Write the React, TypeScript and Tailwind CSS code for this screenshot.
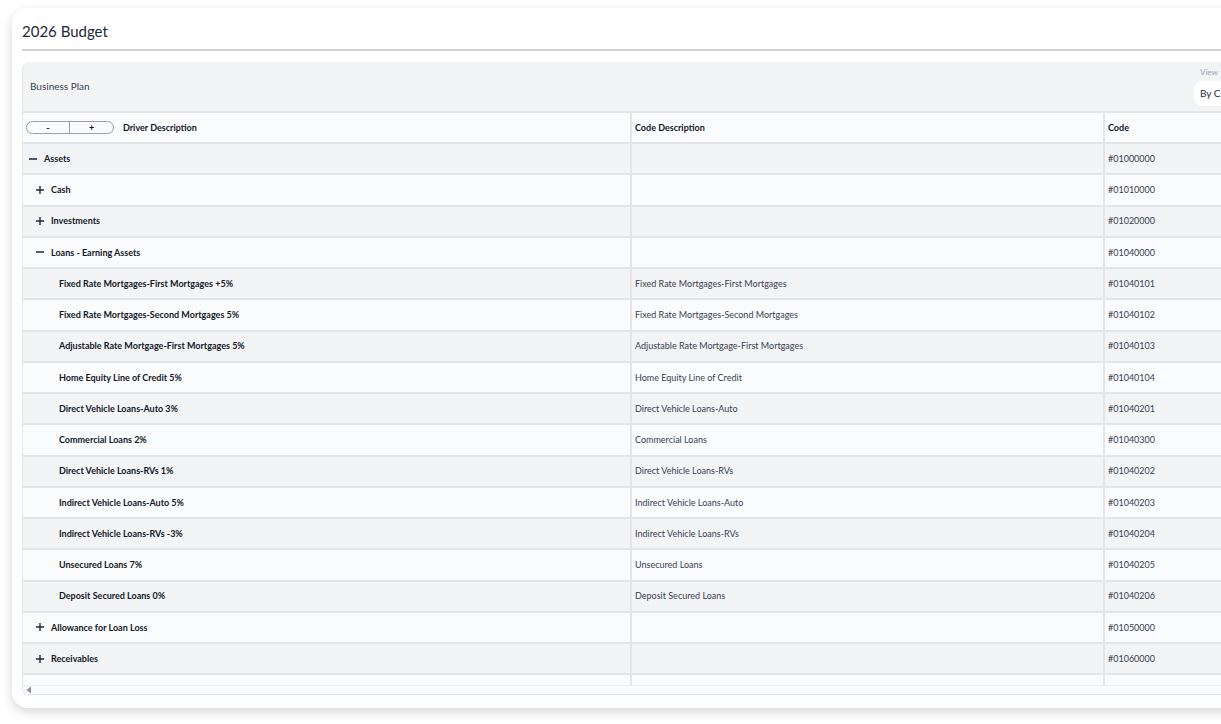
import React from "react";

type Row = { label: string; desc: string; code: string; level: 0 | 1 | 2; icon?: "minus" | "plus" };

const rows: Row[] = [
  { label: "Assets", desc: "", code: "#01000000", level: 0, icon: "minus" },
  { label: "Cash", desc: "", code: "#01010000", level: 1, icon: "plus" },
  { label: "Investments", desc: "", code: "#01020000", level: 1, icon: "plus" },
  { label: "Loans - Earning Assets", desc: "", code: "#01040000", level: 1, icon: "minus" },
  { label: "Fixed Rate Mortgages-First Mortgages +5%", desc: "Fixed Rate Mortgages-First Mortgages", code: "#01040101", level: 2 },
  { label: "Fixed Rate Mortgages-Second Mortgages 5%", desc: "Fixed Rate Mortgages-Second Mortgages", code: "#01040102", level: 2 },
  { label: "Adjustable Rate Mortgage-First Mortgages 5%", desc: "Adjustable Rate Mortgage-First Mortgages", code: "#01040103", level: 2 },
  { label: "Home Equity Line of Credit 5%", desc: "Home Equity Line of Credit", code: "#01040104", level: 2 },
  { label: "Direct Vehicle Loans-Auto 3%", desc: "Direct Vehicle Loans-Auto", code: "#01040201", level: 2 },
  { label: "Commercial Loans 2%", desc: "Commercial Loans", code: "#01040300", level: 2 },
  { label: "Direct Vehicle Loans-RVs 1%", desc: "Direct Vehicle Loans-RVs", code: "#01040202", level: 2 },
  { label: "Indirect Vehicle Loans-Auto 5%", desc: "Indirect Vehicle Loans-Auto", code: "#01040203", level: 2 },
  { label: "Indirect Vehicle Loans-RVs -3%", desc: "Indirect Vehicle Loans-RVs", code: "#01040204", level: 2 },
  { label: "Unsecured Loans 7%", desc: "Unsecured Loans", code: "#01040205", level: 2 },
  { label: "Deposit Secured Loans 0%", desc: "Deposit Secured Loans", code: "#01040206", level: 2 },
  { label: "Allowance for Loan Loss", desc: "", code: "#01050000", level: 1, icon: "plus" },
  { label: "Receivables", desc: "", code: "#01060000", level: 1, icon: "plus" },
];

function Minus() {
  return (
    <svg width="10" height="10" viewBox="0 0 10 10" className="shrink-0">
      <path d="M1 5H9" stroke="#1f2937" strokeWidth="1.4" />
    </svg>
  );
}
function Plus() {
  return (
    <svg width="10" height="10" viewBox="0 0 10 10" className="shrink-0">
      <path d="M1 5H9M5 1V9" stroke="#1f2937" strokeWidth="1.4" />
    </svg>
  );
}

export default function App() {
  return (
    <div
      className="w-[1221px] h-[724px] overflow-hidden bg-white"
      style={{ fontFamily: "Lato, 'Noto Sans', sans-serif" }}
    >
      <div className="ml-[12px] mt-[8px] w-[1240px] h-[700px] bg-white rounded-[16px] shadow-[0_4px_12px_rgba(0,0,0,0.16)] pl-[10px] flex flex-col">
        <div className="h-[43px] shrink-0 flex items-end pb-[10px] border-b-2 border-[#cfd2d7]">
          <span className="text-[15px] text-[#1f2937] leading-none">2026 Budget</span>
        </div>
        <div className="mt-[11px] h-[633px] shrink-0 rounded-tl-[8px] rounded-bl-[6px] bg-[#f3f4f6] border-l border-b border-[#e3e5e9] flex flex-col overflow-hidden">
          <div className="h-[51px] shrink-0 flex items-center justify-between pl-[7px] border-b-2 border-[#e3e5e9]">
            <span className="text-[10px] text-[#374151]">Business Plan</span>
            <div className="w-[50px] mr-[8px] self-start mt-[6px] flex flex-col">
              <span className="text-[8px] text-[#9ca3af] pl-[6px] leading-none">View</span>
              <div className="mt-[5px] h-[25px] bg-white rounded-l-[8px] flex items-center pl-[6px] text-[10px] text-[#1f2937] overflow-hidden whitespace-nowrap">
                By C
              </div>
            </div>
          </div>
          <div className="grid grid-cols-[609px_473px_1fr] h-[31px] shrink-0 bg-[#fafbfd] border-b-2 border-[#e3e5e9] text-[9px] font-bold text-[#111827]">
            <div className="flex items-center pl-[3px] border-r-2 border-[#e3e5e9]">
              <div className="flex w-[88px] h-[13px] border border-[#9aa0a8] rounded-full overflow-hidden text-[9px] leading-none">
                <div className="w-[43px] flex items-center justify-center border-r border-[#9aa0a8]">-</div>
                <div className="flex-1 flex items-center justify-center">+</div>
              </div>
              <span className="ml-[9px]">Driver Description</span>
            </div>
            <div className="flex items-center pl-[3px] border-r-2 border-[#e3e5e9]">Code Description</div>
            <div className="flex items-center pl-[3px]">Code</div>
          </div>
          {rows.map((r, i) => (
            <div
              key={r.code}
              className={`grid grid-cols-[609px_473px_1fr] h-[31.25px] shrink-0 border-b-2 border-[#e3e5e9] text-[9px] text-[#1f2937] ${
                i % 2 === 0 ? "bg-[#f3f4f6]" : "bg-[#fafbfd]"
              }`}
            >
              <div
                className={`flex items-center border-r-2 border-[#e3e5e9] font-bold text-[#111827] ${
                  r.level === 0 ? "pl-[5px]" : r.level === 1 ? "pl-[12px]" : "pl-[36px]"
                }`}
              >
                {r.icon === "minus" && <Minus />}
                {r.icon === "plus" && <Plus />}
                <span className={r.icon ? "ml-[6px]" : ""}>{r.label}</span>
              </div>
              <div className="flex items-center pl-[3px] border-r-2 border-[#e3e5e9] text-[#374151]">{r.desc}</div>
              <div className="flex items-center pl-[3px] text-[#374151]">{r.code}</div>
            </div>
          ))}
          <div className="grid grid-cols-[609px_473px_1fr] h-[10px] shrink-0 bg-[#fafbfd]">
            <div className="border-r-2 border-[#e3e5e9]" />
            <div className="border-r-2 border-[#e3e5e9]" />
            <div />
          </div>
          <div className="flex-1 bg-[#fafbfd] border-t border-[#eceef1] flex items-center pl-[3px]">
            <svg width="6" height="8" viewBox="0 0 6 8">
              <path d="M5 0.5V7.5L0.5 4Z" fill="#8a8f96" />
            </svg>
          </div>
        </div>
      </div>
    </div>
  );
}
